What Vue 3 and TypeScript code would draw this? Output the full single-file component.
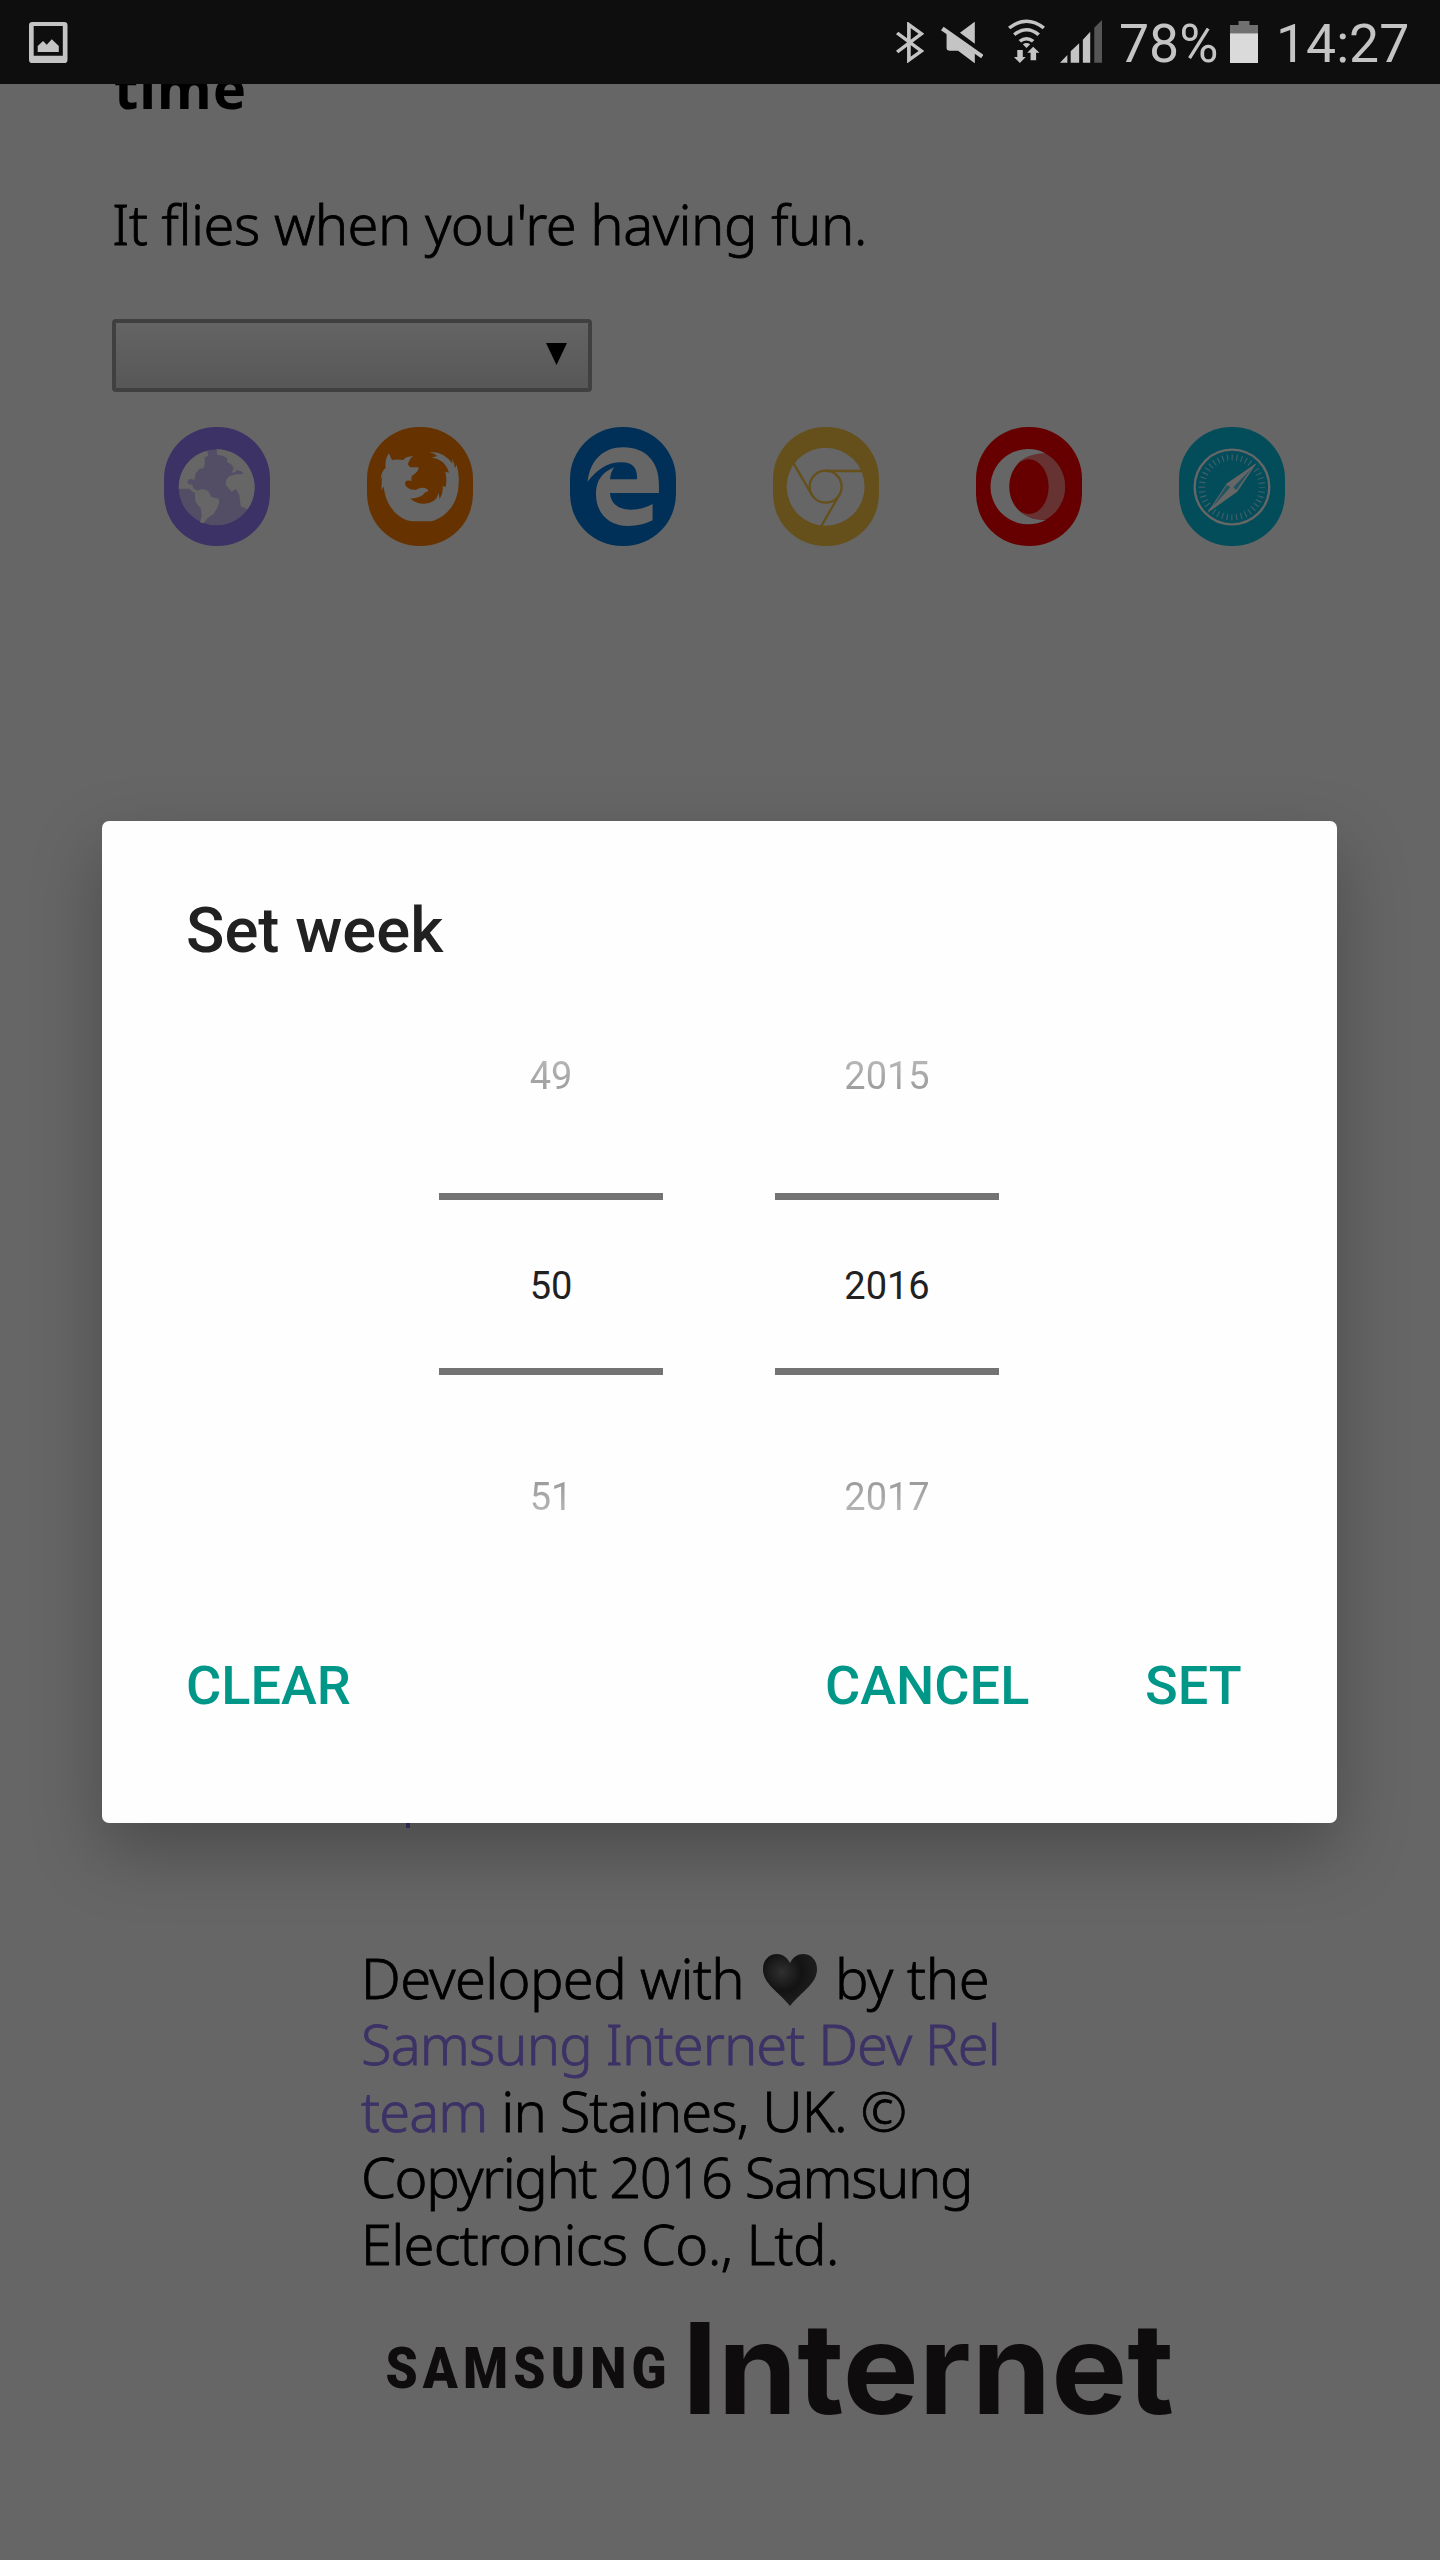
<script setup lang="ts">
interface Picker {
  name: string
  values: [string, string, string]
}

const pickers: Picker[] = [
  { name: 'week', values: ['49', '50', '51'] },
  { name: 'year', values: ['2015', '2016', '2017'] },
]
</script>

<template>
  <div class="screen">
    <header class="status">
      <svg class="i-image" viewBox="88 66 115 123" preserveAspectRatio="none">
        <path fill-rule="evenodd" d="M98 66H193Q203 66 203 76V179Q203 189 193 189H98Q88 189 88 179V76Q88 66 98 66ZM102 78V167H189V78Z" />
        <path d="M114 138L130 123L141 134L156 118L177 138V156H114Z" />
      </svg>
      <div class="status-right">
        <svg class="i-bt" viewBox="98 66 76 123" preserveAspectRatio="none">
          <path fill="none" stroke="#c4c4c4" stroke-width="10" d="M101 99L167 153L133 180V74L167 101L101 156" />
        </svg>
        <svg class="i-mute" viewBox="219 66 113 123" preserveAspectRatio="none">
          <path d="M270 98L310 65V131Z" />
          <path d="M234 100L310 160V190L265 152H243Q234 152 234 145Z" />
          <path d="M226 80L333 164L327 175L219 91Z" />
        </svg>
        <svg class="i-wifi" viewBox="400 57 100 132" preserveAspectRatio="none">
          <g fill="none" stroke="#c4c4c4" stroke-width="10">
            <path d="M403 84Q450 43 497 84" />
            <path d="M417 104Q450 74 483 104" />
            <path d="M432 124Q450 108 468 124" />
          </g>
          <path d="M450 144L440 133Q450 125 460 133Z" />
          <path d="M425 150H440V171H448L432 189L416 171H425Z" />
          <path d="M468 140L485 158H476V181H461V158H452Z" />
        </svg>
        <svg class="i-signal" viewBox="540 60 114 129" preserveAspectRatio="none">
          <path d="M540 188L560 165V188ZM569 188V154L592 130V188ZM602 188V119L622 95V188Z" />
          <path fill="#555" d="M633 188V83L654 60V188Z" />
        </svg>
        <span class="pct">78%</span>
        <svg class="i-batt" viewBox="1000 63 76 126" preserveAspectRatio="none">
          <path fill="#707070" d="M1000 75H1023V63H1053V75H1076V101H1000Z" />
          <path fill="#dadada" d="M1000 100H1076V189H1000Z" />
        </svg>
        <span class="clock">14:27</span>
      </div>
    </header>

    <main class="page">
      <h2>time</h2>
      <p class="intro">It flies when you're having fun.</p>
      <div class="select">
        <svg class="arrow" viewBox="0 0 21 22"><path d="M0 0H21L10.5 22Z" /></svg>
      </div>

      <div class="browsers">
        <span class="badge globe">
          <svg viewBox="73 50 317 357" preserveAspectRatio="none">
            <circle cx="231" cy="231" r="114" fill="#534d65" />
            <path d="M203 121L206 136L195 141L196 160L192 174L180 175L168 189L165 208L149 206L143 214L146 221L158 223L161 234L178 243L165 248L148 235H117A114 114 0 0 1 203 121Z" />
            <path d="M176 240Q192 233 206 243L215 259L237 265Q242 275 233 292L221 312L205 322L191 339L181 336L186 318L184 295L168 275L165 252Z" />
            <path d="M231 117A114 114 0 0 1 324 297L303 288L299 255L289 236L276 244L259 225Q256 206 270 197L288 192L311 191Q307 180 300 182L292 179L286 186L276 187L282 173L276 163L262 155L262 143L248 136L232 133Z" />
          </svg>
        </span>
        <span class="badge firefox">
          <svg viewBox="682 50 317 357" preserveAspectRatio="none">
            <path d="M748 129Q752 140 757 149Q774 146 791 149Q800 137 821 138Q808 146 805 163L812 171H837Q838 183 816 197L815 212Q796 207 796 221Q800 238 828 239Q841 231 855 233Q865 235 866 243L857 246Q846 263 812 265Q830 280 853 280Q890 279 897 248L900 267Q912 247 909 226L918 231Q923 207 917 184L928 187Q917 147 876 142L893 137Q883 128 869 125Q910 121 939 160L937 145Q945 157 946 174L951 163Q960 195 957 218C957 270 930 312 885 330Q880 333 865 333H825Q810 333 800 329C765 315 737 280 732 228L726 240Q725 215 728 199L723 209Q725 183 738 172Q735 147 748 129Z" />
          </svg>
        </span>
        <span class="badge edge">
          <svg viewBox="90 50 317 357" preserveAspectRatio="none">
            <path d="M143 214C150 150 190 111 250 111C318 111 357 155 357 222V248H210C212 280 235 298 274 298Q308 298 338 281V330Q305 347 265 347C205 347 168 308 168 250C168 210 188 185 223 171Q212 185 210 207H291C293 175 280 156 245 156C200 156 172 178 143 214Z" />
          </svg>
        </span>
        <span class="badge chrome">
          <svg viewBox="700 50 317 357" preserveAspectRatio="none">
            <circle cx="858" cy="229" r="117" />
            <g fill="none" stroke="#65501b" stroke-width="7">
              <circle cx="858" cy="229" r="48" />
              <path d="M858 182H972M760 156L816 252M900 252L844 349" />
            </g>
          </svg>
        </span>
        <span class="badge opera">
          <svg viewBox="79 50 317 357" preserveAspectRatio="none">
            <path fill="#663232" d="M290 131A113 113 0 0 1 290 327C250 331 225 318 210 300V158C225 140 250 127 290 131Z" />
            <ellipse cx="238" cy="229" rx="59" ry="82" fill="#660000" />
            <path d="M290 130A113 113 0 1 0 290 328C220 332 179 285 179 229C179 173 220 126 290 130Z" />
          </svg>
        </span>
        <span class="badge safari">
          <svg viewBox="687 50 317 357" preserveAspectRatio="none">
            <g fill="none">
              <circle cx="846" cy="230" r="112" stroke="#666" stroke-width="7" />
              <circle cx="846" cy="231" r="90" stroke="#44606a" stroke-width="19" stroke-dasharray="3.2 10.94" stroke-dashoffset="1.6" />
            </g>
            <path d="M920 158L862 244L772 308L831 219Z" />
            <path fill="#1f5560" d="M905 174L859 239L850 231ZM787 291L841 231L831 224Z" />
          </svg>
        </span>
      </div>

      <footer class="about">
        <div class="link-tail"></div>
        <p class="l1"><span class="dev">Developed with</span><svg class="heart" viewBox="0 0 54 52" preserveAspectRatio="none">
          <defs>
            <radialGradient id="heartFill" cx=".35" cy=".35" r=".6">
              <stop offset="0" stop-color="#303030" />
              <stop offset=".6" stop-color="#131313" />
              <stop offset="1" stop-color="#1c1c1c" />
            </radialGradient>
          </defs>
          <path fill="url(#heartFill)" d="M27 9C24 3 19 0 14 0C6 0 0 6 0 15C0 30 15 37 27 52C39 37 54 30 54 15C54 6 48 0 40 0C35 0 30 3 27 9Z" />
        </svg><span class="by">by the</span></p>
        <p class="l2"><a href="#">Samsung Internet Dev Rel</a></p>
        <p class="l3"><a href="#">team</a> in Staines, UK. ©</p>
        <p class="l4">Copyright 2016 Samsung</p>
        <p class="l5">Electronics Co., Ltd.</p>
        <svg class="wordmark" viewBox="380 2310 800 120">
          <text class="wm-samsung" transform="scale(.91 1)" x="423.5" y="2388.5" textLength="309" lengthAdjust="spacing">SAMSUNG</text>
          <text class="wm-internet" x="682" y="2414" textLength="492" lengthAdjust="spacingAndGlyphs">Internet</text>
        </svg>
      </footer>
    </main>

    <section class="dialog">
      <h1>Set week</h1>
      <div class="pickers">
        <div v-for="p in pickers" :key="p.name" class="picker">
          <span class="num before">{{ p.values[0] }}</span>
          <span class="num current">{{ p.values[1] }}</span>
          <span class="num after">{{ p.values[2] }}</span>
        </div>
      </div>
      <div class="actions">
        <button class="clear">CLEAR</button>
        <button class="cancel">CANCEL</button>
        <button class="set">SET</button>
      </div>
    </section>
  </div>
</template>

<style>
body {
  margin: 0;
  background: #666;
}
</style>

<style scoped>
.screen {
  position: relative;
  width: 1440px;
  height: 2560px;
  overflow: hidden;
  background: #666;
  display: flex;
  flex-direction: column;
  font-family: Roboto, sans-serif;
}
svg {
  display: block;
  flex: none;
}
.status {
  height: 84px;
  flex: none;
  box-sizing: border-box;
  background: #0e0e0e;
  color: #c4c4c4;
  fill: #c4c4c4;
  display: flex;
  justify-content: space-between;
  align-items: flex-start;
  padding: 0 31px 0 29px;
}
.i-image {
  width: 38.5px;
  height: 41px;
  margin-top: 22px;
}
.status-right {
  display: flex;
  align-items: flex-start;
}
.i-bt {
  width: 28px;
  height: 41px;
  margin-top: 22px;
}
.i-mute {
  width: 42px;
  height: 41px;
  margin: 22px 0 0 17px;
}
.i-wifi {
  width: 37px;
  height: 44px;
  margin: 19px 0 0 25px;
}
.i-signal {
  width: 42px;
  height: 43px;
  margin: 20px 0 0 15px;
}
.pct,
.clock {
  font-size: 53.5px;
  line-height: 62px;
  margin-top: 13px;
  white-space: nowrap;
}
.pct {
  width: 98px;
  margin-left: 17px;
}
.i-batt {
  width: 28px;
  height: 42px;
  margin: 21px 0 0 13px;
}
.clock {
  width: 133px;
  margin-left: 18px;
}
.page {
  flex: 1;
  overflow: hidden;
  display: flex;
  flex-direction: column;
  align-items: flex-start;
  color: #000;
  font-family: "Noto Sans", sans-serif;
  font-size: 56px;
  line-height: 66.6px;
}
h2,
p {
  margin: 0;
  white-space: nowrap;
}
h2 {
  margin: -30px 0 0 114px;
  font-size: 56px;
  font-weight: 700;
  letter-spacing: 1px;
}
.intro {
  margin: 69px 0 0 112px;
  font-weight: 300;
  letter-spacing: -0.47px;
  -webkit-text-stroke: 0.8px currentColor;
}
.select {
  box-sizing: border-box;
  width: 480px;
  height: 73px;
  margin: 62.5px 0 0 112px;
  border: 4px solid #404040;
  border-radius: 4px;
  background: linear-gradient(#646464, #575757);
  display: flex;
  justify-content: flex-end;
}
.arrow {
  width: 21px;
  height: 22px;
  margin: 20px 21px 0 0;
}
.browsers {
  display: flex;
  gap: 97.4px;
  margin: 35px 0 0 164.3px;
}
.badge {
  width: 105.6px;
  height: 119px;
  border-radius: 52px;
  overflow: hidden;
  fill: #666;
}
.badge svg {
  width: 105.6px;
  height: 119px;
}
.globe {
  background: #3d3265;
}
.firefox {
  background: #663300;
}
.edge {
  background: #003057;
}
.chrome {
  background: #65501b;
}
.opera {
  background: #660000;
}
.safari {
  background: #034d5b;
}
.about {
  margin: 1230px 0 0 361px;
  font-weight: 300;
  -webkit-text-stroke: 0.8px currentColor;
}
.link-tail {
  width: 4px;
  height: 52px;
  margin: 0 0 116px 45px;
  background: #3d3266;
}
.about a {
  color: #3d3266;
  text-decoration: none;
  -webkit-text-stroke: 0.8px #3d3266;
}
.l1 {
  display: flex;
}
.dev {
  width: 402px;
  letter-spacing: -0.65px;
}
.heart {
  width: 54px;
  height: 52px;
  margin-top: 10px;
}
.by {
  margin-left: 18px;
  letter-spacing: -0.4px;
}
.l2 {
  letter-spacing: -0.9px;
}
.l3 {
  letter-spacing: -0.87px;
}
.l4 {
  letter-spacing: -1.4px;
}
.l5 {
  letter-spacing: -0.7px;
}
.wordmark {
  width: 800px;
  height: 120px;
  margin: 33px 0 0 19px;
  overflow: visible;
  fill: #0e0c0d;
  -webkit-text-stroke: 0;
}
.wm-samsung {
  font: 900 56.5px Roboto, sans-serif;
}
.wm-internet {
  font: 700 127px Inter, sans-serif;
}
.dialog {
  position: absolute;
  left: 102px;
  top: 821px;
  width: 1235px;
  height: 1002px;
  box-sizing: border-box;
  padding: 71px 84px 0;
  border-radius: 7px;
  background: #fefefe;
  box-shadow: 0 28px 70px rgba(0, 0, 0, 0.27);
}
h1 {
  margin: 0;
  font-size: 63.4px;
  line-height: 76px;
  font-weight: 500;
  color: #212121;
}
.pickers {
  display: flex;
  gap: 112px;
  margin: 58px 0 0 253px;
}
.picker {
  width: 224px;
  display: flex;
  flex-direction: column;
  text-align: center;
  font-size: 38px;
  line-height: 46px;
}
.num {
  height: 46px;
}
.before,
.after {
  color: transparent;
  -webkit-background-clip: text;
  background-clip: text;
}
.before {
  margin: 27px 0 94px;
  background-image: linear-gradient(#bcbcbc, #959595);
}
.after {
  margin-top: 99px;
  background-image: linear-gradient(#959595, #bcbcbc);
}
.num.current {
  height: 168px;
  line-height: 173px;
  border-top: 7px solid #737373;
  border-bottom: 7px solid #737373;
  color: #212121;
}
.actions {
  display: flex;
  margin-top: 134px;
}
button {
  border: 0;
  padding: 0;
  background: none;
  color: #009688;
  font: 500 54px/64px Roboto, sans-serif;
  text-align: left;
}
.clear {
  width: 639px;
}
.cancel {
  width: 320px;
}
</style>
